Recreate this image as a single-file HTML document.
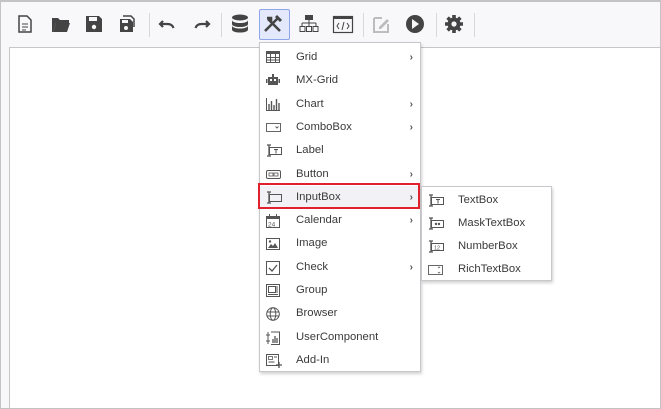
<!DOCTYPE html>
<html><head><style>
*{margin:0;padding:0;box-sizing:border-box}
body{width:661px;height:409px;overflow:hidden;background:#f8f8fb;font-family:"Liberation Sans",sans-serif;position:relative}
.frame{position:absolute;left:0;top:0;width:661px;height:409px;border:1px solid #c3c3c6;border-top:2px solid #c3c3c6}
.canvas{position:absolute;left:9px;top:47px;width:652px;height:362px;background:#fff;border-left:1px solid #c6c6c9;border-top:1px solid #c6c6c9}
.sep{position:absolute;top:13px;width:1px;height:24px;background:#d8d8dc}
.act{position:absolute;left:259px;top:9px;width:31px;height:31px;background:#e3e9fb;border:1px solid #8fa5ea;border-radius:2px}
.menu{position:absolute;background:#fff;border:1px solid #c8c8cc;box-shadow:1px 2px 3px rgba(0,0,0,.18)}
.it{position:absolute;left:0;height:23px;width:100%;font-size:11.3px;color:#3a3a3a;line-height:23px}
.it span{position:absolute;left:36px}
.it i{position:absolute;right:7px;font-style:normal;font-size:10px;color:#555;font-weight:bold}
.it svg{position:absolute;left:6px;top:5px}
</style></head><body>
<div class="canvas"></div>
<div class="frame"></div>
<div class="act"></div>
<svg width="661" height="47" style="position:absolute;left:0;top:0" fill="#444" stroke="#444">
<path d="M19 16h8l4 4v12h-12z" fill="none" stroke-width="1.5"/><path d="M22 24h6M22 27h6M22 30h4" stroke-width="1"/>
<path d="M52 18h6l2 2h9v3H56l-3 9h-1z" stroke="none"/><path d="M56 23h14l-3 9H53z" stroke="none"/>
<path d="M86 16h13l3 3v13H86z" stroke="none"/><rect x="89" y="17" width="8" height="4" fill="#f8f8fb" stroke="none"/><circle cx="94" cy="27" r="2.2" fill="#f8f8fb" stroke="none"/>
<path d="M123 16h8l3 3v8" fill="none" stroke-width="1.5"/><path d="M120 19h10l3 3v10h-13z" stroke="none"/><circle cx="126" cy="28" r="2" fill="#f8f8fb" stroke="none"/><rect x="122" y="20" width="6" height="3" fill="#f8f8fb" stroke="none"/>
<path d="M163 21l-3 3 3 3M160.5 24h7c3 0 5 1 6 4" fill="none" stroke-width="2.2"/>
<path d="M206 21l3 3-3 3M208.5 24h-7c-3 0-5 1-6 4" fill="none" stroke-width="2.2"/>
<ellipse cx="240" cy="17.5" rx="8" ry="3" stroke="none"/><path d="M232 20c0 4 16 4 16 0v4c0 4-16 4-16 0zM232 25.5c0 4 16 4 16 0v4c0 4-16 4-16 0z" stroke="none"/>
<path d="M265 31l13-13M267 18l4 0 0 4M280 31l-12-12" fill="none" stroke-width="2.6"/><path d="M276 16l5 5" stroke-width="3"/>
<rect x="305" y="15" width="8" height="5" stroke="none"/><path d="M309 20v3M302 23h14M302 23v3M309 23v3M316 23v3" fill="none" stroke-width="1"/><rect x="300" y="26.5" width="5" height="5" fill="none" stroke-width="1"/><rect x="306.5" y="26.5" width="5" height="5" fill="none" stroke-width="1"/><rect x="313" y="26.5" width="5" height="5" fill="none" stroke-width="1"/>
<rect x="333.5" y="16.5" width="19" height="16" fill="none" stroke-width="1.2"/><rect x="333" y="16" width="20" height="3" stroke="none"/><path d="M339 23l-2 3 2 3M347 23l2 3-2 3M344 22l-2 8" fill="none" stroke-width="1"/>
<path d="M374 18h8M374 18v14h14v-8" fill="none" stroke="#bdbdbd" stroke-width="2"/><path d="M379 27l8-8 2 2-8 8h-2z" fill="#bdbdbd" stroke="none"/>
<circle cx="415" cy="24" r="9" stroke="none"/><path d="M412 19v10l7-5z" fill="#f8f8fb" stroke="none"/>
<g transform="translate(454 24)"><circle r="6.5" stroke="none"/><g stroke-width="3.6"><path d="M0-9v18M-9 0h18M-6.4-6.4l12.8 12.8M6.4-6.4l-12.8 12.8"/></g><circle r="2.6" fill="#f8f8fb" stroke="none"/></g>
</svg>
<div class="sep" style="left:149px"></div><div class="sep" style="left:221px"></div><div class="sep" style="left:363px"></div><div class="sep" style="left:436px"></div><div class="sep" style="left:474px"></div>

<div class="menu" style="left:259px;top:42px;width:162px;height:330px">
<div class="it" style="top:3px"><svg width="14" height="12"><rect x=".5" y=".5" width="13" height="11" fill="none" stroke="#555"/><rect x="0" y="0" width="14" height="3" fill="#555"/><path d="M0 6.5h14M0 9h14M4.5 0v12M9.5 0v12" stroke="#555"/></svg><span>Grid</span><i>›</i></div>
<div class="it" style="top:26.3px"><svg width="14" height="12"><rect x="2" y="3" width="10" height="8" fill="#555"/><rect x="6" y="0" width="2" height="3" fill="#555"/><rect x="0" y="5" width="1.5" height="4" fill="#555"/><rect x="12.5" y="5" width="1.5" height="4" fill="#555"/><rect x="4" y="5" width="2" height="2" fill="#fff"/><rect x="8" y="5" width="2" height="2" fill="#fff"/></svg><span>MX-Grid</span></div>
<div class="it" style="top:49.6px"><svg width="14" height="13"><path d="M.5 0v12.5H14" stroke="#555" fill="none"/><path d="M3 6v6M5.5 3v9M8 7v5M10.5 1v11M13 5v7" stroke="#555" stroke-width="1.4"/></svg><span>Chart</span><i>›</i></div>
<div class="it" style="top:72.9px"><svg width="15" height="12"><rect x=".5" y="2.5" width="14" height="8" fill="none" stroke="#666"/><path d="M9.5 5.5l1.5 1.5 1.5-1.5" stroke="#666" fill="none"/></svg><span>ComboBox</span><i>›</i></div>
<div class="it" style="top:96.2px"><svg width="17" height="13"><path d="M3 1v11M1 1h4M1 12h4" stroke="#555" fill="none" stroke-width="1.3"/><rect x="3.5" y="3.5" width="12" height="7" fill="none" stroke="#555"/><path d="M8 5.5h4M10 5.5v4" stroke="#555"/></svg><span>Label</span></div>
<div class="it" style="top:119.5px"><svg width="15" height="12"><rect x=".5" y="2.5" width="14" height="8" rx="1.5" fill="none" stroke="#555"/><rect x="3" y="5" width="4" height="3" fill="none" stroke="#555" stroke-width=".8"/><rect x="8" y="5" width="4" height="3" fill="none" stroke="#555" stroke-width=".8"/></svg><span>Button</span><i>›</i></div>
<div class="it" style="top:142.8px;background:#f2f2f6"><svg width="17" height="13"><path d="M3 1v11M1 1h4M1 12h4" stroke="#555" fill="none" stroke-width="1.3"/><rect x="3.5" y="3.5" width="12" height="7" fill="none" stroke="#555"/></svg><span>InputBox</span><i>›</i></div>
<div class="it" style="top:166.1px"><svg width="14" height="14"><rect x=".5" y="2.5" width="13" height="11" fill="none" stroke="#555"/><rect x="0" y="2" width="14" height="3" fill="#555"/><path d="M3.5 0v3M10.5 0v3" stroke="#555"/><text x="2" y="12.5" font-size="6.5" fill="#555" font-family="Liberation Sans">24</text></svg><span>Calendar</span><i>›</i></div>
<div class="it" style="top:189.4px"><svg width="14" height="13"><rect x=".5" y="1.5" width="13" height="11" fill="none" stroke="#555"/><path d="M2 11l3-4 2 2 2-3 3 5z" fill="#555"/><circle cx="4" cy="4.5" r="1.2" fill="#555"/></svg><span>Image</span></div>
<div class="it" style="top:212.7px"><svg width="14" height="14"><rect x=".5" y=".5" width="13" height="13" fill="none" stroke="#555"/><path d="M3 7l3 3 5-6" stroke="#555" fill="none" stroke-width="1.3"/></svg><span>Check</span><i>›</i></div>
<div class="it" style="top:236px"><svg width="14" height="13"><rect x=".5" y=".5" width="13" height="12" fill="none" stroke="#555"/><rect x="2.5" y="2.5" width="7" height="6" fill="none" stroke="#555"/><path d="M11 2v7M2 10.5h10" stroke="#555"/></svg><span>Group</span></div>
<div class="it" style="top:259.3px"><svg width="14" height="14"><circle cx="7" cy="7" r="6.3" fill="none" stroke="#555"/><ellipse cx="7" cy="7" rx="2.8" ry="6.3" fill="none" stroke="#555"/><path d="M1 5h12M1 9h12" stroke="#555"/></svg><span>Browser</span></div>
<div class="it" style="top:282.6px"><svg width="14" height="14"><path d="M2 1v12M0 4h4M0 10h4" stroke="#555" fill="none"/><path d="M5 1h8.5v12.5H5" fill="none" stroke="#555"/><path d="M7 8v4M9 5v7M11 7v5" stroke="#555" stroke-width="1.3"/></svg><span>UserComponent</span></div>
<div class="it" style="top:305.9px"><svg width="16" height="14"><rect x=".5" y=".5" width="12" height="11" fill="none" stroke="#555"/><rect x="2.5" y="2.5" width="4" height="3" fill="none" stroke="#555" stroke-width=".8"/><path d="M8 3h3M2.5 8h6" stroke="#555"/><path d="M13 8v6M10 11h6" stroke="#555" stroke-width="1.3"/></svg><span>Add-In</span></div>
</div>
<div style="position:absolute;left:258px;top:183px;width:162px;height:26px;border:2px solid #e0202a"></div>

<div class="menu" style="left:421px;top:186px;width:131px;height:95px">
<div class="it" style="top:1.5px"><svg width="17" height="13"><path d="M3 1v11M1 1h4M1 12h4" stroke="#555" fill="none" stroke-width="1.3"/><rect x="3.5" y="3.5" width="12" height="7" fill="none" stroke="#555"/><path d="M8 5.5h4M10 5.5v4" stroke="#555"/></svg><span>TextBox</span></div>
<div class="it" style="top:24.8px"><svg width="17" height="13"><path d="M3 1v11M1 1h4M1 12h4" stroke="#555" fill="none" stroke-width="1.3"/><rect x="3.5" y="3.5" width="12" height="7" fill="none" stroke="#555"/><circle cx="8" cy="7" r="1.2" fill="#555"/><circle cx="11" cy="7" r="1.2" fill="#555"/></svg><span>MaskTextBox</span></div>
<div class="it" style="top:48.1px"><svg width="17" height="13"><path d="M3 1v11M1 1h4M1 12h4" stroke="#555" fill="none" stroke-width="1.3"/><rect x="3.5" y="3.5" width="12" height="7" fill="none" stroke="#555"/><text x="6" y="9.3" font-size="5.5" fill="#555" font-family="Liberation Sans">12</text></svg><span>NumberBox</span></div>
<div class="it" style="top:71.4px"><svg width="15" height="13"><rect x=".5" y="2.5" width="14" height="9" fill="none" stroke="#666"/><path d="M10 5l1-1 1 1M10 9l1 1 1-1" stroke="#666" fill="none" stroke-width=".8"/></svg><span>RichTextBox</span></div>
</div>
</body></html>
